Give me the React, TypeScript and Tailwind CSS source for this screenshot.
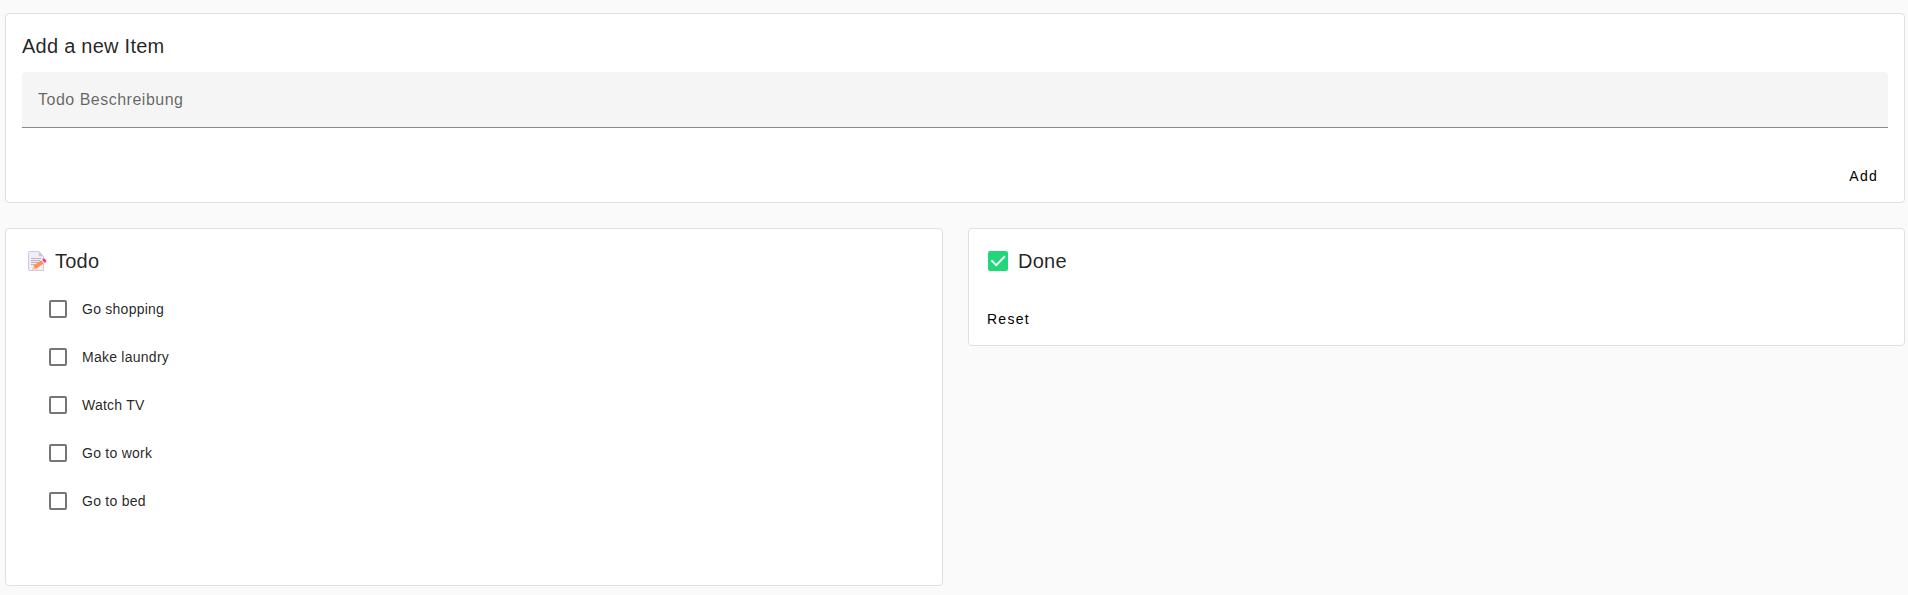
const todos = ["Go shopping", "Make laundry", "Watch TV", "Go to work", "Go to bed"];

const card = "rounded-[4px] border border-[#e0e0e0] bg-white";
const title = "text-[20px] leading-8 tracking-[0.25px] text-black/87";
const button = "flex h-9 items-center rounded-[4px] px-2 text-[14px] tracking-[1.25px] text-black";

function MemoIcon() {
  return (
    <svg width="20" height="20" viewBox="0 0 20 20">
      <path d="M1.2.5h9.6L15.5 5.2v14.3H1.2a.7.7 0 0 1-.7-.7V1.2a.7.7 0 0 1 .7-.7Z" fill="#f3edf9" stroke="#cfc8dc" />
      <path d="M10.8.4v4.1c0 .5.3.8.8.8h4Z" fill="#cbc2d8" />
      <path d="M3 7.5h10M3 9.5h9M3 11.5h7M3 13.5h4" stroke="#b4abc0" strokeWidth=".9" />
      <path d="m4 18.9 1.4-4L7.9 18Z" fill="#fbc98c" />
      <path d="m5.4 14.8 7.8-5.6 2.4 3.4-7.7 5.5Z" fill="#ff9144" />
      <path d="m13.2 9.2 1-.7 2.4 3.4-1 .7Z" fill="#dfe3ec" />
      <path d="m14.2 8.4 1-.8c1.6-1 4.2 2.3 2.7 3.6l-1.2.8Z" fill="#fa3f7a" />
    </svg>
  );
}

function DoneIcon() {
  return (
    <svg width="20" height="20" viewBox="0 0 20 20">
      <rect width="20" height="20" rx="2" fill="#22d67c" />
      <path d="m3.3 9.3 5 4.8 8.6-8.8" fill="none" stroke="#f1fff7" strokeWidth="2" />
    </svg>
  );
}

export default function App() {
  return (
    <main className="flex min-h-screen flex-col gap-[25px] bg-[#fafafa] pt-[13px] pr-[3px] pb-[9px] pl-[5px] font-['Liberation_Sans',Arial,sans-serif]">
      <section className={`${card} flex h-[190px] flex-col px-4 pt-4`}>
        <h2 className={title}>Add a new Item</h2>
        <input
          placeholder="Todo Beschreibung"
          className="mt-[10px] h-14 w-full rounded-t-[4px] border-b border-[#8a8a8a] bg-[#f5f5f5] px-4 text-[16px] tracking-[0.5px] outline-none placeholder:text-black/60"
        />
        <div className="mt-[30px] flex justify-end pr-[2px]">
          <button className={button}>Add</button>
        </div>
      </section>
      <div className="grid grid-cols-[938px_937px] items-start gap-[25px]">
        <section className={`${card} h-[358px] pt-4`}>
          <div className="flex items-center gap-[7px] pl-[22px]">
            <MemoIcon />
            <h2 className={title}>Todo</h2>
          </div>
          <ul className="mt-[8px] pl-[43px]">
            {todos.map((todo) => (
              <li key={todo}>
                <label className="flex h-12 items-center gap-[15px] text-[14px] tracking-[0.25px] text-black/87">
                  <input type="checkbox" className="size-[18px] appearance-none rounded-[2px] border-2 border-[#757575]" />
                  {todo}
                </label>
              </li>
            ))}
          </ul>
        </section>
        <section className={`${card} h-[118px] pt-4`}>
          <div className="flex items-center gap-[10px] pl-[19px]">
            <DoneIcon />
            <h2 className={title}>Done</h2>
          </div>
          <div className="mt-[24px] flex pl-[10px]">
            <button className={button}>Reset</button>
          </div>
        </section>
      </div>
    </main>
  );
}
